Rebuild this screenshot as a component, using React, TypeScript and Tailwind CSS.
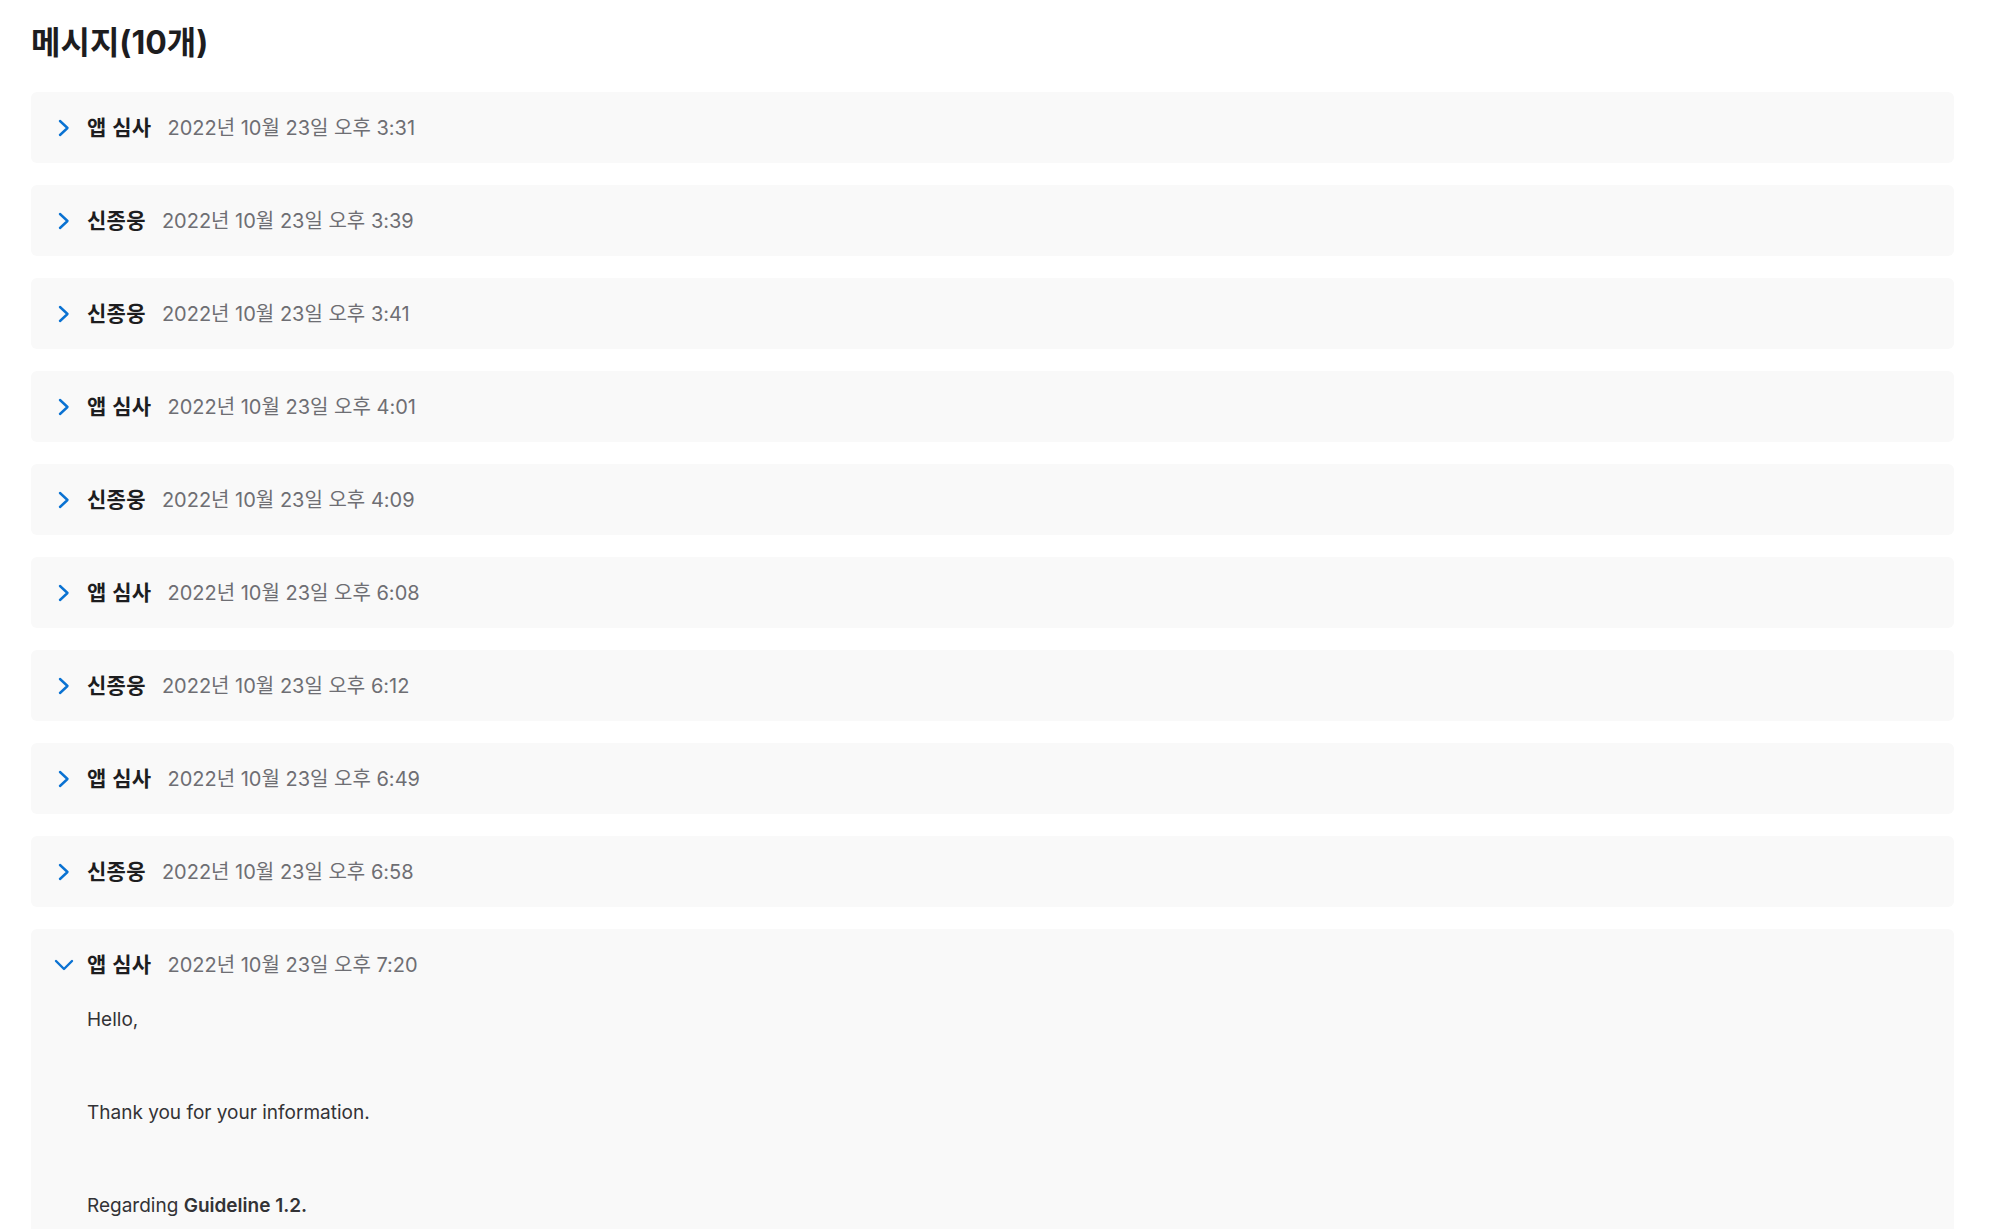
type Message = {
  sender: string;
  time: string;
};

const messages: Message[] = [
  { sender: "앱 심사", time: "2022년 10월 23일 오후 3:31" },
  { sender: "신종웅", time: "2022년 10월 23일 오후 3:39" },
  { sender: "신종웅", time: "2022년 10월 23일 오후 3:41" },
  { sender: "앱 심사", time: "2022년 10월 23일 오후 4:01" },
  { sender: "신종웅", time: "2022년 10월 23일 오후 4:09" },
  { sender: "앱 심사", time: "2022년 10월 23일 오후 6:08" },
  { sender: "신종웅", time: "2022년 10월 23일 오후 6:12" },
  { sender: "앱 심사", time: "2022년 10월 23일 오후 6:49" },
  { sender: "신종웅", time: "2022년 10월 23일 오후 6:58" },
];

function Chevron({ open }: { open?: boolean }) {
  return open ? (
    <svg width="20" height="12" viewBox="0 0 20 12" fill="none">
      <polyline
        points="2,2 10,10 18,2"
        stroke="#0a72d2"
        strokeWidth="2.4"
        strokeLinecap="round"
        strokeLinejoin="round"
      />
    </svg>
  ) : (
    <svg width="12" height="18" viewBox="0 0 12 18" fill="none">
      <polyline
        points="2,2 9.5,9 2,16"
        stroke="#0a72d2"
        strokeWidth="2.4"
        strokeLinecap="round"
        strokeLinejoin="round"
      />
    </svg>
  );
}

function Header({ sender, time, open }: Message & { open?: boolean }) {
  return (
    <div className="flex h-[71px] items-center">
      <div className="flex w-[56px] justify-center pl-[10px]">
        <Chevron open={open} />
      </div>
      <span className="text-[21px] font-semibold tracking-[0.3px] text-[#1d1d1f]">{sender}</span>
      <span className="ml-[16px] text-[20px] text-[#6e6e73]">{time}</span>
    </div>
  );
}

export default function App() {
  return (
    <main
      className="min-h-screen bg-white pl-[31px] pr-[35px] pt-[21px]"
      style={{ fontFamily: '"Inter", "Noto Sans CJK KR", sans-serif' }}
    >
      <h1 className="mb-[27px] text-[32px] font-bold leading-[44px] text-[#1d1d1f]">메시지(10개)</h1>
      <div className="flex flex-col gap-[22px]">
        {messages.map((m, i) => (
          <div key={i} className="rounded-[6px] bg-[#f9f9f9]">
            <Header {...m} />
          </div>
        ))}
        <div className="rounded-[6px] bg-[#f9f9f9] pb-[40px]">
          <Header sender="앱 심사" time="2022년 10월 23일 오후 7:20" open />
          <div className="mt-[6px] flex flex-col gap-[65px] pl-[56px] text-[19px] leading-[28px] text-[#333336]">
            <p>Hello,</p>
            <p>Thank you for your information.</p>
            <p>
              Regarding <span className="font-semibold">Guideline 1.2.</span>
            </p>
          </div>
        </div>
      </div>
    </main>
  );
}
